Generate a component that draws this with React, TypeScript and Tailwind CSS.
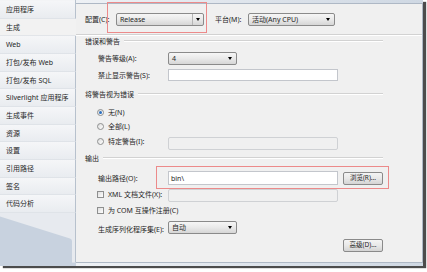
import React from "react";

const Arrow = () => (
  <span className="w-0 h-0 border-l-[2.5px] border-r-[2.5px] border-t-[3px] border-l-transparent border-r-transparent border-t-black" />
);

const Sep = () => (
  <div className="flex-1 h-[2px] border-t border-t-[#d2d2d2] border-b border-b-white" />
);

const Section = ({ text, cls }: { text: string; cls: string }) => (
  <div className={cls}>
    <span className="text-[7px] leading-none">{text}</span>
    <div className="ml-[4px] flex-1 flex items-center">
      <Sep />
    </div>
  </div>
);

const Radio = ({ on }: { on?: boolean }) => (
  <span className="w-[7px] h-[7px] rounded-full border border-[#8e8f8f] bg-gradient-to-br from-[#dcdcdc] to-white flex items-center justify-center">
    {on && <span className="w-[3px] h-[3px] rounded-full bg-[#2a6fc0]" />}
  </span>
);

const Check = () => (
  <span className="w-[7px] h-[7px] border border-[#8e8f8f] bg-gradient-to-br from-[#dedede] to-white" />
);

const Btn = ({ text }: { text: string }) => (
  <div className="w-[40px] h-[13px] rounded-[2px] border border-[#8a8a8a] bg-gradient-to-b from-[#f4f4f4] via-[#e8e8e8] to-[#d4d4d4] flex items-center justify-center text-[6.5px] leading-none">
    {text}
  </div>
);

export default function App() {
  const items = [
    "应用程序",
    "生成",
    "Web",
    "打包/发布 Web",
    "打包/发布 SQL",
    "Silverlight 应用程序",
    "生成事件",
    "资源",
    "设置",
    "引用路径",
    "签名",
    "代码分析",
  ];
  return (
    <div className="relative w-[427px] h-[272px] bg-white overflow-hidden font-['Noto_Sans','Noto_Sans_CJK_SC',sans-serif] text-[#262626]">
      <div className="w-[423px] h-[266px] flex bg-[#c8d2df] shadow-[3px_2px_1px_rgba(45,45,45,0.85)]">
        {/* sidebar */}
        <div className="w-[76px] flex flex-col">
          <div className="h-px bg-[#f3f4f6] border-r border-r-[#b7c1cd]" />
          {items.map((t, i) =>
            i === 1 ? (
              <div
                key={t}
                className="h-[17.7px] flex items-center pl-[6px] text-[7px] leading-none bg-[#f2f2f2] border-b border-b-[#e2e5e9]"
              >
                {t}
              </div>
            ) : (
              <div
                key={t}
                className="h-[17.7px] flex items-center pl-[6px] text-[7px] leading-none bg-gradient-to-b from-[#f5f6f8] to-[#e9ecf0] border-b border-b-[#dfe3e8] border-r border-r-[#b7c1cd]"
              >
                {t}
              </div>
            )
          )}
          <div className="flex-1">
            <svg width="76" height="53" viewBox="0 0 76 53" className="block">
              <rect x="0" y="0" width="76" height="53" fill="#c8d2df" />
              <path d="M0 0 H76 V49.5 H72 V28 Q72 26 70 25.4 L0 3.6 Z" fill="#e7eaef" />
              <line x1="75.5" y1="0" x2="75.5" y2="49.5" stroke="#b7c1cd" strokeWidth="1" />
            </svg>
          </div>
        </div>
        {/* main */}
        <div className="flex-1 flex flex-col pt-[3px] pb-[3px] bg-gradient-to-r from-[#eef1f5] to-[#cfd8e3]">
          <div className="flex-1 bg-[#f0f0f0] border-t border-r border-b border-[#aeb8c5] flex flex-col">
            {/* row 1 */}
            <div className="h-[30px] flex items-center pl-[9px]">
              <span className="w-[31px] text-[7px] leading-none">配置(C):</span>
              <div className="w-[88px] h-[13px] rounded-[2px] border border-[#8a8a8a] bg-gradient-to-b from-[#f6f6f6] via-[#e9e9e9] to-[#d6d6d6] flex items-center text-[7px] leading-none">
                <span className="flex-1 pl-[3px]">Release</span>
                <span className="h-full w-px bg-[#b5b5b5]" />
                <span className="w-[10px] flex justify-center">
                  <Arrow />
                </span>
              </div>
              <span className="ml-[11px] w-[33px] text-[7px] leading-none">平台(M):</span>
              <div className="w-[87px] h-[13px] rounded-[2px] border border-[#8a8a8a] bg-gradient-to-b from-[#f6f6f6] via-[#e9e9e9] to-[#d6d6d6] flex items-center pl-[3px] pr-[4px] text-[7px] leading-none">
                <span className="flex-1">活动(Any CPU)</span>
                <Arrow />
              </div>
            </div>
            <div className="h-[2px] border-t border-t-[#d2d2d2] border-b border-b-white" />
            <Section text="错误和警告" cls="h-[10px] flex items-center pl-[9px] pr-[39px]" />
            {/* warning level */}
            <div className="mt-[6px] h-[13px] flex items-center pl-[22px]">
              <span className="w-[70px] text-[7px] leading-none">警告等级(A):</span>
              <div className="w-[69px] h-[13px] rounded-[2px] border border-[#8a8a8a] bg-gradient-to-b from-[#f6f6f6] via-[#e9e9e9] to-[#d6d6d6] flex items-center pl-[3px] pr-[4px] text-[7px] leading-none">
                <span className="flex-1">4</span>
                <Arrow />
              </div>
            </div>
            <div className="mt-[4px] h-[12px] flex items-center pl-[22px]">
              <span className="w-[70px] text-[7px] leading-none">禁止显示警告(S):</span>
              <div className="w-[170px] h-[12px] bg-white border border-[#c3c6cc]" />
            </div>
            <Section text="将警告视为错误" cls="mt-[8px] h-[10px] flex items-center pl-[9px] pr-[39px]" />
            <div className="mt-[8px] h-[10px] flex items-center pl-[21px] gap-[4px]">
              <Radio on />
              <span className="text-[7px] leading-none">无(N)</span>
            </div>
            <div className="mt-[4px] h-[10px] flex items-center pl-[21px] gap-[4px]">
              <Radio />
              <span className="text-[7px] leading-none">全部(L)</span>
            </div>
            <div className="mt-[6px] h-[13px] flex items-center pl-[21px]">
              <div className="w-[71px] flex items-center gap-[4px] mb-[4px]">
                <Radio />
                <span className="text-[7px] leading-none">特定警告(I):</span>
              </div>
              <div className="w-[170px] h-[13px] rounded-[2px] bg-[#f0f0f0] border border-[#cfd1d4]" />
            </div>
            <Section text="输出" cls="mt-[3px] h-[10px] flex items-center pl-[9px] pr-[39px]" />
            <div className="mt-[8px] h-[14px] flex items-center pl-[22px]">
              <span className="w-[70px] text-[7px] leading-none">输出路径(O):</span>
              <div className="w-[170px] h-[14px] bg-white border border-[#c3c6cc] flex items-center pl-[2px] text-[7px] leading-none">
                bin\
              </div>
              <div className="ml-[5px]">
                <Btn text="浏览(R)..." />
              </div>
            </div>
            <div className="mt-[4px] h-[13px] flex items-center pl-[21px]">
              <div className="w-[71px] flex items-center gap-[4px] mb-[2px]">
                <Check />
                <span className="text-[7px] leading-none">XML 文档文件(X):</span>
              </div>
              <div className="w-[170px] h-[13px] rounded-[2px] bg-[#f0f0f0] border border-[#cfd1d4]" />
            </div>
            <div className="mt-[3px] h-[10px] flex items-center pl-[21px] gap-[4px]">
              <Check />
              <span className="text-[7px] leading-none">为 COM 互操作注册(C)</span>
            </div>
            <div className="mt-[6px] h-[13px] flex items-center pl-[22px]">
              <span className="w-[70px] text-[7px] leading-none mt-[3px]">生成序列化程序集(E):</span>
              <div className="w-[69px] h-[13px] rounded-[2px] border border-[#8a8a8a] bg-gradient-to-b from-[#f6f6f6] via-[#e9e9e9] to-[#d6d6d6] flex items-center pl-[3px] pr-[4px] text-[7px] leading-none">
                <span className="flex-1">自动</span>
                <Arrow />
              </div>
            </div>
            <div className="mt-[5px] h-[13px] flex items-center justify-end pr-[39px]">
              <Btn text="高级(D)..." />
            </div>
          </div>
        </div>
      </div>
      {/* annotation rectangles */}
      <div className="absolute left-[107px] top-[2px] w-[100px] h-[31px] border-[1.5px] border-[#ec8a8a]" />
      <div className="absolute left-[156px] top-[166px] w-[233px] h-[23px] border-[1.5px] border-[#ec8a8a]" />
    </div>
  );
}
